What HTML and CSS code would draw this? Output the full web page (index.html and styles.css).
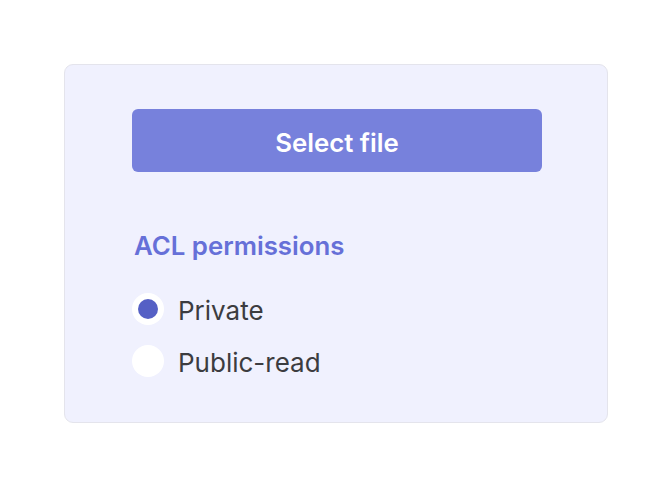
FILE: index.html
```html
<!DOCTYPE html>
<html lang="en">
<head>
<meta charset="utf-8">
<title>Upload</title>
<link rel="stylesheet" href="styles.css">
</head>
<body>
<div class="page">
  <div class="card">
    <button class="select-btn" type="button">Select file</button>
    <div class="acl">
      <div class="acl-title">ACL permissions</div>
      <div class="options">
        <label class="option">
          <span class="radio checked"><span class="dot"></span></span>
          <span class="label">Private</span>
        </label>
        <label class="option">
          <span class="radio"></span>
          <span class="label">Public-read</span>
        </label>
      </div>
    </div>
  </div>
</div>
</body>
</html>
```

FILE: styles.css
```css
* { box-sizing: border-box; }
html, body { margin: 0; padding: 0; background: #ffffff; }
body { font-family: Inter, "Noto Sans", sans-serif; width: 672px; height: 488px; }
.page { padding: 64px 0 0 64px; }
.card {
  width: 544px;
  height: 359px;
  background: #f0f1fe;
  border: 1px solid #e4e4ec;
  border-radius: 9px;
  padding: 44px 65px 0 67px;
}
.select-btn {
  display: block;
  width: 410px;
  height: 63px;
  border: none;
  border-radius: 6px;
  background: #7781dc;
  color: #ffffff;
  font-family: Inter, sans-serif;
  font-size: 25.8px;
  font-weight: 600;
  padding: 3px 0 0;
}
.acl { margin-top: 57px; }
.acl-title {
  font-size: 25.8px;
  font-weight: 600;
  line-height: 32px;
  color: #6670d8;
  padding: 1px 0 0 2px;
}
.options { display: flex; flex-direction: column; gap: 20px; margin-top: 31px; }
.option { display: flex; align-items: center; gap: 14px; height: 32px; }
.radio {
  width: 32px; height: 32px; border-radius: 50%;
  background: #ffffff;
  display: flex; align-items: center; justify-content: center;
  flex-shrink: 0;
}
.dot { width: 20px; height: 20px; border-radius: 50%; background: #5560c5; }
.label { font-size: 26px; color: #3c3c40; line-height: 32px; padding-top: 4px; }
```
